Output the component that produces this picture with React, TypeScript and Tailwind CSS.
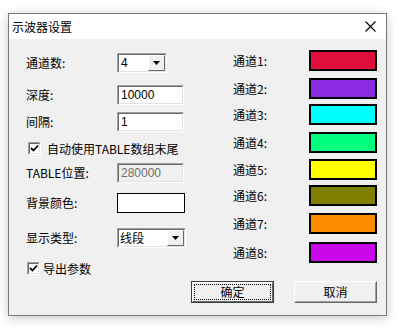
import React from "react";

const font = "font-['Noto_Sans_CJK_SC','Noto_Sans',sans-serif]";

function Sunken({ className, children }: { className: string; children?: React.ReactNode }) {
  return (
    <div className={`border border-t-[#a0a0a0] border-l-[#a0a0a0] border-b-white border-r-white ${className}`}>
      <div className="h-full w-full border border-t-[#696969] border-l-[#696969] border-b-[#e3e3e3] border-r-[#e3e3e3] flex items-center">
        {children}
      </div>
    </div>
  );
}

function Arrow() {
  return (
    <div className="h-full w-[17px] border border-t-white border-l-white border-b-[#696969] border-r-[#696969] bg-[#f0f0f0] flex items-center justify-center">
      <svg width="7" height="4" viewBox="0 0 7 4">
        <polygon points="0,0 7,0 3.5,4" fill="#000" />
      </svg>
    </div>
  );
}

function Check() {
  return (
    <Sunken className="w-[13px] h-[13px] bg-white">
      <div className="w-full h-full bg-white flex items-center justify-center">
        <svg width="9" height="9" viewBox="0 0 9 9">
          <polyline points="1,4 3.5,6.5 8,1.5" fill="none" stroke="#000" strokeWidth="1.8" />
        </svg>
      </div>
    </Sunken>
  );
}

const channels = [
  { n: 1, c: "bg-[#e00e3a]", m: "mt-0" },
  { n: 2, c: "bg-[#8a2be2]", m: "mt-[7px]" },
  { n: 3, c: "bg-[#00ffff]", m: "mt-[5px]" },
  { n: 4, c: "bg-[#00ff7f]", m: "mt-[7px]" },
  { n: 5, c: "bg-[#ffff00]", m: "mt-[6px]" },
  { n: 6, c: "bg-[#808000]", m: "mt-[5px]" },
  { n: 7, c: "bg-[#ff8c00]", m: "mt-[7px]" },
  { n: 8, c: "bg-[#c808e8]", m: "mt-[8px]" },
];

export default function App() {
  return (
    <div className={`min-h-screen bg-white pt-[13px] pl-[8px] ${font} text-[12px] text-black leading-none`}>
      <div className="w-[379px] h-[303px] border border-[#7a7a7a] bg-[#f0f0f0] shadow-[0_2px_10px_rgba(0,0,0,0.22)] flex flex-col">
        <div className="h-[25px] bg-white flex items-center justify-between pl-[3px] pr-[10px]">
          <span className="text-[12px]">示波器设置</span>
          <svg width="11" height="11" viewBox="0 0 11 11">
            <path d="M0.5 0.5 L10.5 10.5 M10.5 0.5 L0.5 10.5" stroke="#000" strokeWidth="1.1" />
          </svg>
        </div>
        <div className="flex flex-col">
          <div className="flex">
            <div className="w-[207px] pl-[17px] flex flex-col">
              <div className="mt-[14px] h-[20px] flex items-center">
                <span className="w-[91px]">通道数:</span>
                <Sunken className="w-[50px] h-[20px] bg-white">
                  <div className="flex-1 h-full bg-white flex items-center pl-[2px] font-['Liberation_Sans',sans-serif]">4</div>
                  <Arrow />
                </Sunken>
              </div>
              <div className="mt-[12px] h-[20px] flex items-center">
                <span className="w-[91px]">深度:</span>
                <Sunken className="w-[67px] h-[20px] bg-white">
                  <span className="pl-[2px] font-['Liberation_Sans',sans-serif]">10000</span>
                </Sunken>
              </div>
              <div className="mt-[7px] h-[20px] flex items-center">
                <span className="w-[91px]">间隔:</span>
                <Sunken className="w-[67px] h-[20px] bg-white">
                  <span className="pl-[2px] font-['Liberation_Sans',sans-serif]">1</span>
                </Sunken>
              </div>
              <div className="mt-[10px] h-[13px] flex items-center">
                <div className="ml-[2px]"><Check /></div>
                <span className="ml-[6px]">自动使用TABLE数组末尾</span>
              </div>
              <div className="mt-[8px] h-[20px] flex items-center">
                <span className="w-[91px]">TABLE位置:</span>
                <Sunken className="w-[67px] h-[20px] bg-[#f0f0f0]">
                  <span className="pl-[2px] text-[#6d6d6d] font-['Liberation_Sans',sans-serif]">280000</span>
                </Sunken>
              </div>
              <div className="mt-[10px] h-[20px] flex items-center">
                <span className="w-[91px]">背景颜色:</span>
                <div className="w-[68px] h-[20px] bg-white border border-black" />
              </div>
              <div className="mt-[15px] h-[20px] flex items-center">
                <span className="w-[91px]">显示类型:</span>
                <Sunken className="w-[69px] h-[20px] bg-white">
                  <div className="flex-1 h-full bg-white flex items-center pl-[1px]">线段</div>
                  <Arrow />
                </Sunken>
              </div>
              <div className="mt-[14px] h-[13px] flex items-center">
                <div className="ml-[1px]"><Check /></div>
                <span className="ml-[3px]">导出参数</span>
              </div>
            </div>
            <div className="pl-[17px] pt-[11px] flex flex-col">
              {channels.map((ch) => (
                <div key={ch.n} className={`${ch.m} h-[21px] flex items-center`}>
                  <span className="w-[76px]">通道{ch.n}:</span>
                  <div className={`w-[68px] h-[21px] border-2 border-black ${ch.c}`} />
                </div>
              ))}
            </div>
          </div>
          <div className="mt-[6px] pl-[182px] flex gap-[20px]">
            <div className="w-[83px] h-[22px] border border-[#3c3c3c]">
              <div className="h-full w-full border border-t-white border-l-white border-b-[#696969] border-r-[#696969] bg-[#f0f0f0] p-[1px]">
                <div className="h-full w-full border border-dotted border-black flex items-center justify-center">确定</div>
              </div>
            </div>
            <div className="w-[83px] h-[22px] border border-t-white border-l-white border-b-[#696969] border-r-[#696969]">
              <div className="h-full w-full border border-t-[#f0f0f0] border-l-[#f0f0f0] border-b-[#a0a0a0] border-r-[#a0a0a0] bg-[#f0f0f0] flex items-center justify-center">取消</div>
            </div>
          </div>
        </div>
      </div>
    </div>
  );
}
